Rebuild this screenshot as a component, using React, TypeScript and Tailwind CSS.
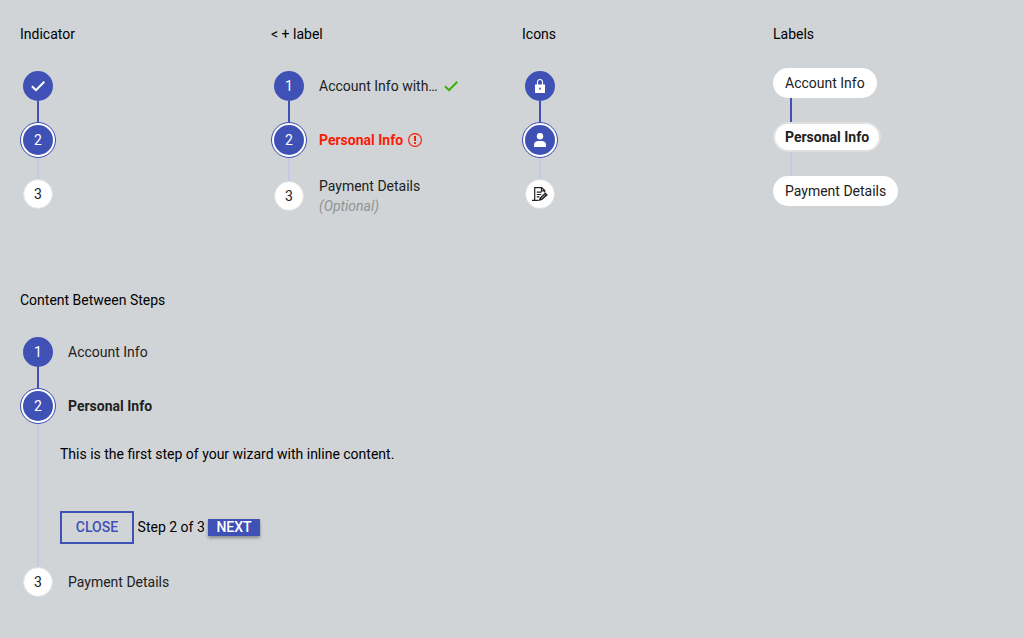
import type { ReactNode } from "react";

type State = "done" | "current" | "todo";

function Marker({ state, children }: { state: State; children: ReactNode }) {
  const look = {
    done: "size-[30px] bg-[#3f51b5] text-white",
    current: "size-[30px] bg-[#3f51b5] text-white ring-2 ring-white outline outline-1 outline-offset-2 outline-[#3f51b5]",
    todo: "size-[30px] border border-[#e0e0e0] bg-white text-[#212121]",
  }[state];
  return (
    <span className="relative flex size-9 shrink-0 items-center justify-center">
      <span className={`flex items-center justify-center rounded-full ${look}`}>{children}</span>
    </span>
  );
}

function Line({ active = false, className = "-mt-[3px] -mb-[3px] h-6" }: { active?: boolean; className?: string }) {
  return <div className={`ml-[17px] w-0.5 ${active ? "bg-[#3f51b5]" : "bg-[#c5cae9]"} ${className}`} />;
}

function Check({ className }: { className: string }) {
  return (
    <svg viewBox="0 0 14 14" className={className} fill="none" stroke="currentColor" strokeWidth="2">
      <path d="M.9 7.200 5 11.200 13.300 2.800" />
    </svg>
  );
}

function Lock() {
  return (
    <svg viewBox="0 0 16 16" className="size-4" fill="none">
      <path d="M5.500 7V4a2.500 2.500 0 0 1 5 0V7" stroke="currentColor" strokeWidth="1.100" />
      <path fillRule="evenodd" fill="currentColor" d="M3 6.500h10V15H3zM7.200 9.800v1.700h1.700V9.800z" />
    </svg>
  );
}

function Person() {
  return (
    <svg viewBox="0 0 16 16" className="size-4" fill="currentColor">
      <circle cx="8" cy="4.2" r="3.2" />
      <path d="M2 15v-2.200C2 10.200 4 9 6 9h4c2 0 4 1.200 4 3.800V15z" />
    </svg>
  );
}

function Contract() {
  return (
    <svg viewBox="0 0 16 16" className="size-4" fill="none" stroke="currentColor" strokeWidth="1.200">
      <path d="M2.700 14V1.600h7l3 3V6.500M9.500 1.600v3.200h3.200M4.800 6.100h4.700M4.800 8.500h4.500M4.800 10.900h2.500M0 14.400h6.500" />
      <path d="m6.500 15 1.300-3.600 5.600-5 2.400 2.500-5.700 5z" fill="currentColor" stroke="none" />
      <path d="m9 12.700 4.300-3.900" stroke="#fff" strokeWidth=".6" />
    </svg>
  );
}

function Alert() {
  return (
    <svg viewBox="0 0 14 14" className="size-3.5" fill="none" stroke="currentColor">
      <circle cx="7" cy="7" r="6.400" strokeWidth="1.100" />
      <path d="M7 3v5M7 9.300v1.700" strokeWidth="2" />
    </svg>
  );
}

function Chip({ current = false, children }: { current?: boolean; children: ReactNode }) {
  return (
    <div
      className={`flex h-[30px] w-fit items-center rounded-full bg-white text-[#212121] ${
        current ? "border-2 border-[#e0e0e0] px-2.5 font-bold" : "px-3"
      }`}
    >
      {children}
    </div>
  );
}

function Section({ title, children }: { title: string; children: ReactNode }) {
  return (
    <section>
      <h2 className="mb-6 text-black">{title}</h2>
      {children}
    </section>
  );
}

export default function App() {
  return (
    <main className="h-[638px] w-[1024px] overflow-hidden bg-[#d0d4d7] pt-6 pl-5 font-['Roboto',sans-serif] text-sm leading-5 text-[#212121]">
      <div className="grid h-[266px] grid-cols-4">
        <Section title="Indicator">
          <Marker state="done"><Check className="size-3.5" /></Marker>
          <Line active />
          <Marker state="current">2</Marker>
          <Line />
          <Marker state="todo">3</Marker>
        </Section>

        <Section title="< + label">
          <div className="flex items-center">
            <Marker state="done">1</Marker>
            <span className="ml-3 w-[119px] whitespace-nowrap">Account Info with…</span>
            <Check className="ml-1.5 size-3.5 text-[#38b000]" />
          </div>
          <Line active />
          <div className="flex items-center font-bold text-[#f91c05]">
            <Marker state="current"><span className="font-normal">2</span></Marker>
            <span className="mr-[5px] ml-3">Personal Info</span>
            <Alert />
          </div>
          <Line className="-mt-[3px] -mb-[5px] h-[26px]" />
          <div className="flex items-center">
            <Marker state="todo">3</Marker>
            <div className="ml-3">
              <div>Payment Details</div>
              <div className="text-[#909395] italic">(Optional)</div>
            </div>
          </div>
        </Section>

        <Section title="Icons">
          <Marker state="done"><Lock /></Marker>
          <Line active />
          <Marker state="current"><Person /></Marker>
          <Line />
          <Marker state="todo"><Contract /></Marker>
        </Section>

        <Section title="Labels">
          <Chip>Account Info</Chip>
          <Line active className="h-6" />
          <Chip current>Personal Info</Chip>
          <Line className="h-6" />
          <Chip>Payment Details</Chip>
        </Section>
      </div>

      <Section title="Content Between Steps">
        <div className="flex items-center">
          <Marker state="done">1</Marker>
          <span className="ml-3">Account Info</span>
        </div>
        <Line active />
        <div className="flex items-center">
          <Marker state="current">2</Marker>
          <span className="ml-3 font-bold">Personal Info</span>
        </div>
        <div className="flex h-[140px] text-black">
          <Line className="-mt-[3px] -mb-[3px]" />
          <div className="ml-[21px] pt-5">
            <p>This is the first step of your wizard with inline content.</p>
            <div className="mt-[47px] flex items-center">
              <button className="h-[33px] w-[74px] border-2 border-[#3f51b5] pb-px font-medium text-[#3f51b5]">CLOSE</button>
              <span className="ml-[3.6px] w-[70.4px] pb-px whitespace-nowrap">Step 2 of 3</span>
              <button className="h-[17px] w-[52px] bg-[#3f51b5] leading-[17px] font-medium text-white shadow-[0_2px_3px_rgba(0,0,0,0.35)]">
                NEXT
              </button>
            </div>
          </div>
        </div>
        <div className="flex items-center">
          <Marker state="todo">3</Marker>
          <span className="ml-3">Payment Details</span>
        </div>
      </Section>
    </main>
  );
}
